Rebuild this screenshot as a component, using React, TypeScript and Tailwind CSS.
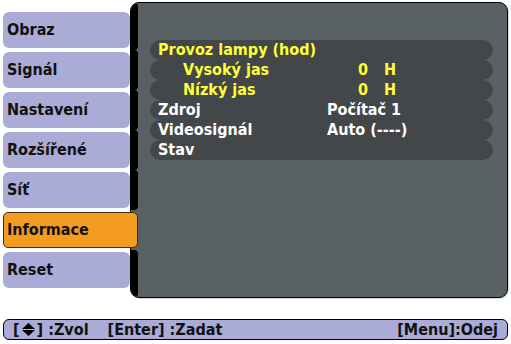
const MENU = ["Obraz", "Signál", "Nastavení", "Rozšířené", "Síť", "Informace", "Reset"];
const SELECTED = "Informace";

type Row = { label: string; value?: string; lamp?: boolean; indent?: boolean };

const ROWS: Row[] = [
  { label: "Provoz lampy (hod)", lamp: true },
  { label: "Vysoký jas", value: "0", lamp: true, indent: true },
  { label: "Nízký jas", value: "0", lamp: true, indent: true },
  { label: "Zdroj", value: "Počítač 1" },
  { label: "Videosignál", value: "Auto (----)" },
  { label: "Stav" },
];

function UpDown() {
  return (
    <svg width="13" height="13" viewBox="0 0 13 13" className="mx-[2px] inline-block">
      <polygon points="6.5,0 13,6 0,6" fill="#000" />
      <polygon points="0,7 13,7 6.5,13" fill="#000" />
    </svg>
  );
}

export default function App() {
  return (
    <div
      className="flex h-[344px] w-[511px] flex-col overflow-hidden bg-white text-[16px] font-bold"
      style={{ fontFamily: '"DejaVu Sans Condensed", "DejaVu Sans", sans-serif' }}
    >
      <div className="mt-[2px] flex h-[296px]">
        {/* menu */}
        <div className="ml-[3px] flex w-[127px] flex-col gap-[4px] pt-[10px]">
          {MENU.map((m) =>
            m === SELECTED ? (
              <div
                key={m}
                className="relative z-10 flex h-[36px] w-[135px] items-center rounded-[5px] border border-[#3b2c12] bg-[#f39c1f] pl-[3px] text-[#111]"
              >
                {m}
              </div>
            ) : (
              <div
                key={m}
                className="flex h-[36px] items-center rounded-[6px] bg-[#aaabd6] pl-[4px] text-[#111]"
              >
                {m}
              </div>
            )
          )}
        </div>

        {/* panel */}
        <div className="flex h-[296px] w-[378px] overflow-hidden rounded-[9px] border border-black bg-[#5a6164] shadow-[1px_1px_0_#d8d8d8]">
          <div className="flex w-[7px] flex-col">
            <div className="h-[47px] rounded-r-[4px] bg-black" />
            <div className="h-[40px] rounded-r-[4px] bg-black" />
            <div className="h-[40px] rounded-r-[4px] bg-black" />
            <div className="h-[40px] rounded-r-[4px] bg-black" />
            <div className="h-[40px] rounded-r-[4px] bg-black" />
            <div className="h-[40px]" />
            <div className="flex-1 rounded-r-[4px] bg-black" />
          </div>

          <div className="ml-[12px] flex w-[343px] flex-col pt-[37px]">
            {ROWS.map((r) => (
              <div
                key={r.label}
                className={`flex h-[20px] items-center rounded-full bg-[#43474a] leading-none ${
                  r.lamp ? "text-[#ffff38]" : "text-white"
                }`}
              >
                <span className={`w-[177px] ${r.indent ? "pl-[33px]" : "pl-[8px]"}`}>{r.label}</span>
                {r.value &&
                  (r.lamp ? (
                    <span className="pl-[31px]">
                      {r.value}
                      <span className="ml-[16px]">H</span>
                    </span>
                  ) : (
                    <span>{r.value}</span>
                  ))}
              </div>
            ))}
          </div>
        </div>
      </div>

      {/* help bar */}
      <div className="mx-[3px] mt-[21px] flex h-[21px] items-center justify-between rounded-[6px] border border-black bg-[#aaabd6] px-[9px] leading-none text-[#111]">
        <div className="flex items-center">
          <span className="flex items-center">
            [<UpDown />] :Zvol
          </span>
          <span className="ml-[19px]">[Enter] :Zadat</span>
        </div>
        <span>[Menu]:Odej</span>
      </div>
    </div>
  );
}
